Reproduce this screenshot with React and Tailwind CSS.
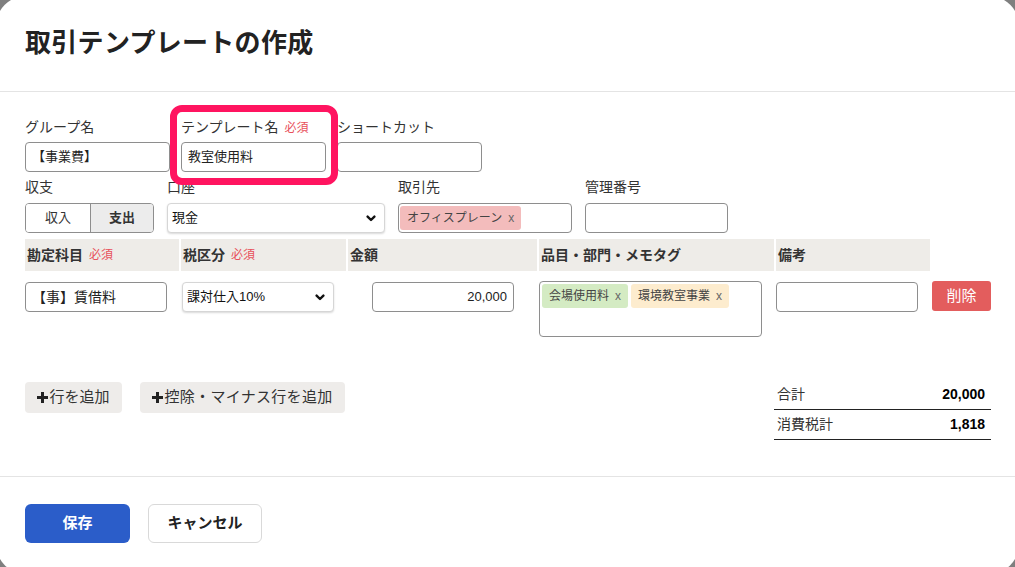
import React from "react";

const font = "font-['Liberation_Sans','Noto_Sans_CJK_JP',sans-serif]";

function Required({ className = "" }) {
  return <span className={`ml-[6px] text-[12px] font-normal text-[#e8505b] ${className}`}>必須</span>;
}

function Label({ children, className = "" }) {
  return <div className={`h-5 text-[14px] leading-5 text-[#333] whitespace-nowrap ${className}`}>{children}</div>;
}

function TextBox({ value = "", className = "", align = "left" }) {
  return (
    <div
      className={`flex h-[30px] items-center rounded-[4px] border border-[#8e8e8e] bg-white px-[6px] text-[13px] text-[#222] ${
        align === "right" ? "justify-end" : ""
      } ${className}`}
    >
      {value}
    </div>
  );
}

function Chevron() {
  return (
    <svg width="10" height="7" viewBox="0 0 10 7" className="shrink-0">
      <polyline points="1.6,1.6 5,5 8.4,1.6" fill="none" stroke="#111" strokeWidth="2.4" strokeLinecap="round" strokeLinejoin="round" />
    </svg>
  );
}

function Select({ value, className = "" }) {
  return (
    <div
      className={`flex h-[30px] items-center justify-between rounded-[4px] border border-[#d6d6d6] bg-white pl-[4px] pr-[8px] text-[13px] text-[#111] shadow-[0_1px_2px_rgba(0,0,0,0.15)] ${className}`}
    >
      <span>{value}</span>
      <Chevron />
    </div>
  );
}

function Tag({ children, color }) {
  return (
    <span className={`flex h-[24px] items-center rounded-[3px] px-[7px] text-[12px] text-[#444] whitespace-nowrap ${color}`}>
      {children}
      <span className="ml-[6px] text-[12px] text-[#666]">x</span>
    </span>
  );
}

function Plus() {
  return (
    <svg width="11" height="11" viewBox="0 0 11 11" className="mr-[1px] shrink-0">
      <rect x="4" y="0" width="3" height="11" fill="#222" />
      <rect x="0" y="4" width="11" height="3" fill="#222" />
    </svg>
  );
}

export default function App() {
  return (
    <div className={`h-[567px] w-[1015px] overflow-hidden bg-[#7f7f7f] ${font}`}>
      <div className="-ml-[4px] -mt-[4px] h-[578px] w-[1023px] rounded-[30px] bg-white pl-[4px] pt-[4px]">
        {/* header */}
        <div className="h-[92px] w-[1015px] border-b border-[#e4e4e4] px-[25px] pt-[27px]">
          <h1 className="text-[26px] font-bold leading-[32px] tracking-[0.3px] text-[#222]">取引テンプレートの作成</h1>
        </div>

        {/* body */}
        <div className="h-[385px] w-[1015px] border-b border-[#e4e4e4] px-[25px] pt-[25px]">
          {/* row 1 */}
          <div className="flex gap-[11px]">
            <div className="w-[145px]">
              <Label className="mb-[5px]">グループ名</Label>
              <TextBox value="【事業費】" />
            </div>
            <div className="relative w-[145px]">
              <Label className="mb-[5px]">
                テンプレート名<Required />
              </Label>
              <TextBox value="教室使用料" />
              <div className="absolute -left-[11px] -top-[12px] z-10 h-[80px] w-[168px] rounded-[12px] border-[7px] border-[#ff1460]" />
            </div>
            <div className="w-[145px]">
              <Label className="mb-[5px]">ショートカット</Label>
              <TextBox />
            </div>
          </div>

          {/* row 2 */}
          <div className="mt-[5px] flex gap-[13px]">
            <div className="w-[129px]">
              <Label className="mb-[6px]">収支</Label>
              <div className="flex h-[30px] overflow-hidden rounded-[4px] border border-[#8e8e8e] text-[13px] text-[#333]">
                <div className="flex w-[64px] items-center justify-center bg-white">収入</div>
                <div className="flex flex-1 items-center justify-center border-l border-[#8e8e8e] bg-[#ececec] font-bold">支出</div>
              </div>
            </div>
            <div className="w-[218px]">
              <Label className="mb-[6px]">口座</Label>
              <Select value="現金" />
            </div>
            <div className="w-[174px]">
              <Label className="mb-[6px]">取引先</Label>
              <div className="flex h-[30px] items-center rounded-[4px] border border-[#8e8e8e] bg-white px-[1px]">
                <Tag color="bg-[#f3bcbc]">オフィスプレーン</Tag>
              </div>
            </div>
            <div className="w-[143px]">
              <Label className="mb-[6px]">管理番号</Label>
              <TextBox />
            </div>
          </div>

          {/* table */}
          <div className="mt-[6px] grid grid-cols-[154px_165px_189px_235px_154px_59px] gap-x-[2px]">
            <div className="flex h-[32px] items-center bg-[#eeece8] px-[2px] text-[14px] font-bold text-[#333]">
              勘定科目<Required />
            </div>
            <div className="flex h-[32px] items-center bg-[#eeece8] px-[2px] text-[14px] font-bold text-[#333]">
              税区分<Required />
            </div>
            <div className="flex h-[32px] items-center bg-[#eeece8] px-[2px] text-[14px] font-bold text-[#333]">金額</div>
            <div className="flex h-[32px] items-center bg-[#eeece8] px-[2px] text-[14px] font-bold text-[#333]">品目・部門・メモタグ</div>
            <div className="flex h-[32px] items-center bg-[#eeece8] px-[2px] text-[14px] font-bold text-[#333]">備考</div>
            <div />

            <div className="pt-[11px]">
              <TextBox value="【事】賃借料" className="w-[142px] text-[14px]" />
            </div>
            <div className="pt-[11px]">
              <Select value="課対仕入10%" className="ml-[1px] w-[152px]" />
            </div>
            <div className="pt-[11px]">
              <TextBox value="20,000" align="right" className="ml-[24px] w-[142px]" />
            </div>
            <div className="pt-[10px]">
              <div className="flex h-[56px] w-[223px] items-start gap-[3px] rounded-[4px] border border-[#8e8e8e] bg-white p-[2px]">
                <Tag color="bg-[#d4ebc3]">会場使用料</Tag>
                <Tag color="bg-[#fdecce]">環境教室事業</Tag>
              </div>
            </div>
            <div className="pt-[11px]">
              <TextBox className="w-[142px]" />
            </div>
            <div className="pt-[10px]">
              <button className="flex h-[30px] w-[59px] items-center justify-center rounded-[3px] bg-[#e35d5d] text-[15px] text-white">削除</button>
            </div>
          </div>

          {/* add buttons & summary */}
          <div className="mt-[43px] flex items-start justify-between">
            <div className="mt-[2px] flex gap-[18px]">
              <button className="flex h-[31px] w-[97px] items-center justify-center rounded-[4px] bg-[#eeecea] text-[15px] text-[#333]">
                <Plus />
                行を追加
              </button>
              <button className="flex h-[31px] w-[205px] items-center justify-center rounded-[4px] bg-[#eeecea] text-[15px] tracking-[0.3px] text-[#333]">
                <Plus />
                控除・マイナス行を追加
              </button>
            </div>
            <div className="mr-[-1px] w-[217px] text-[14px] text-[#333]">
              <div className="flex h-[30px] items-center justify-between border-b border-[#222] pl-[3px] pr-[6px]">
                <span>合計</span>
                <span className="font-bold text-black">20,000</span>
              </div>
              <div className="flex h-[30px] items-center justify-between border-b border-[#222] pl-[3px] pr-[6px]">
                <span>消費税計</span>
                <span className="font-bold text-black">1,818</span>
              </div>
            </div>
          </div>
        </div>

        {/* footer */}
        <div className="flex gap-[18px] px-[25px] pt-[27px]">
          <button className="h-[39px] w-[105px] rounded-[6px] bg-[#2b5dc9] text-[15px] font-bold text-white">保存</button>
          <button className="h-[39px] w-[114px] rounded-[6px] border border-[#d9d9d9] bg-white text-[15px] font-bold text-[#222]">キャンセル</button>
        </div>
      </div>
    </div>
  );
}
